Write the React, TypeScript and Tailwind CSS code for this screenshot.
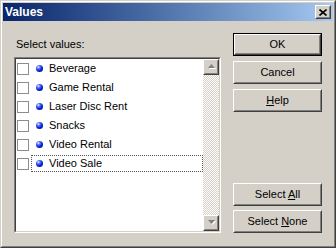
import React from "react";

const items = ["Beverage", "Game Rental", "Laser Disc Rent", "Snacks", "Video Rental", "Video Sale"];

// classic raised bevel used by buttons and scroll arrows
function Raised({ children, className = "" }: { children?: React.ReactNode; className?: string }) {
  return (
    <div className={`border border-t-white border-l-white border-r-[#404040] border-b-[#404040] bg-[#d4d0c8] ${className}`}>
      <div className="w-full h-full border border-t-[#d4d0c8] border-l-[#d4d0c8] border-r-[#808080] border-b-[#808080] flex items-center justify-center">
        {children}
      </div>
    </div>
  );
}

function Btn({ children, isDefault }: { children: React.ReactNode; isDefault?: boolean }) {
  if (isDefault) {
    return (
      <div className="h-[23px] border border-black">
        <Raised className="w-full h-full">{children}</Raised>
      </div>
    );
  }
  return <Raised className="h-[23px] w-full">{children}</Raised>;
}

function Arrow({ down }: { down?: boolean }) {
  return (
    <svg width="9" height="6" viewBox="0 0 9 6">
      {down ? (
        <>
          <path d="M2 1h7l-3.5 4z" fill="#fff" />
          <path d="M1 0h7l-3.5 4z" fill="#808080" />
        </>
      ) : (
        <>
          <path d="M2 5h7l-3.5-4z" fill="#fff" />
          <path d="M1 4h7l-3.5-4z" fill="#808080" />
        </>
      )}
    </svg>
  );
}

export default function App() {
  return (
    <div
      className="w-[336px] h-[248px] bg-[#d4d0c8] border border-t-[#d4d0c8] border-l-[#d4d0c8] border-r-[#404040] border-b-[#404040] text-[11px] text-black"
      style={{ fontFamily: '"Liberation Sans", Arial, sans-serif' }}
    >
      <div className="h-full border border-t-white border-l-white border-r-[#808080] border-b-[#808080] p-px flex flex-col">
        {/* title bar */}
        <div className="h-[18px] flex items-center justify-between pl-[2px] pr-[2px] bg-gradient-to-r from-[#0a246a] to-[#a6caf0]">
          <span className="text-white font-bold text-[12px] leading-[14px]">Values</span>
          <Raised className="w-[16px] h-[14px]">
            <svg width="8" height="7" viewBox="0 0 8 7">
              <path d="M0.5 0.5L7.5 6.5M7.5 0.5L0.5 6.5" stroke="#000" strokeWidth="1.6" />
            </svg>
          </Raised>
        </div>

        {/* body */}
        <div className="flex flex-1 pb-[12px]">
          <div className="ml-[11px] w-[207px] pt-[17px] flex flex-col">
            <div className="pl-[2px] h-[13px] leading-[13px] mb-[6px]">Select values:</div>
            <div className="flex-1 border border-t-[#808080] border-l-[#808080] border-r-white border-b-white">
              <div className="h-full border border-t-[#404040] border-l-[#404040] border-r-[#d4d0c8] border-b-[#d4d0c8] flex">
                <div className="flex-1 bg-white">
                  {items.map((name, i) => (
                    <div key={name} className="h-[19px] flex items-center pl-[1px]">
                      <div className="w-[12px] h-[12px] border border-[#8c8c8c] bg-white" />
                      <div
                        className={`ml-[2px] flex-1 h-[17px] flex items-center border border-dotted ${
                          i === items.length - 1 ? "border-[#555]" : "border-transparent"
                        }`}
                      >
                        <span className="ml-[4px] w-[7px] h-[7px] rounded-full bg-[radial-gradient(circle_at_35%_30%,#ffffff_0,#5f7cff_22%,#0a20d8_55%,#000070_100%)]" />
                        <span className="ml-[6px] leading-[13px] whitespace-nowrap">{name}</span>
                      </div>
                    </div>
                  ))}
                </div>
                <div className="w-[16px] flex flex-col">
                  <Raised className="h-[16px]">
                    <Arrow />
                  </Raised>
                  <div className="flex-1 bg-[repeating-conic-gradient(#d4d0c8_0_25%,#ffffff_0_50%)] bg-[length:2px_2px]" />
                  <Raised className="h-[16px]">
                    <Arrow down />
                  </Raised>
                </div>
              </div>
            </div>
          </div>

          <div className="ml-[12px] w-[89px] pt-[12px] flex flex-col">
            <div className="flex flex-col gap-[5px]">
              <Btn isDefault>OK</Btn>
              <Btn>Cancel</Btn>
              <Btn>
                <span>
                  <u>H</u>elp
                </span>
              </Btn>
            </div>
            <div className="mt-auto flex flex-col gap-[4px]">
              <Btn>
                <span>
                  Select <u>A</u>ll
                </span>
              </Btn>
              <Btn>
                <span>
                  Select <u>N</u>one
                </span>
              </Btn>
            </div>
          </div>
        </div>
      </div>
    </div>
  );
}
